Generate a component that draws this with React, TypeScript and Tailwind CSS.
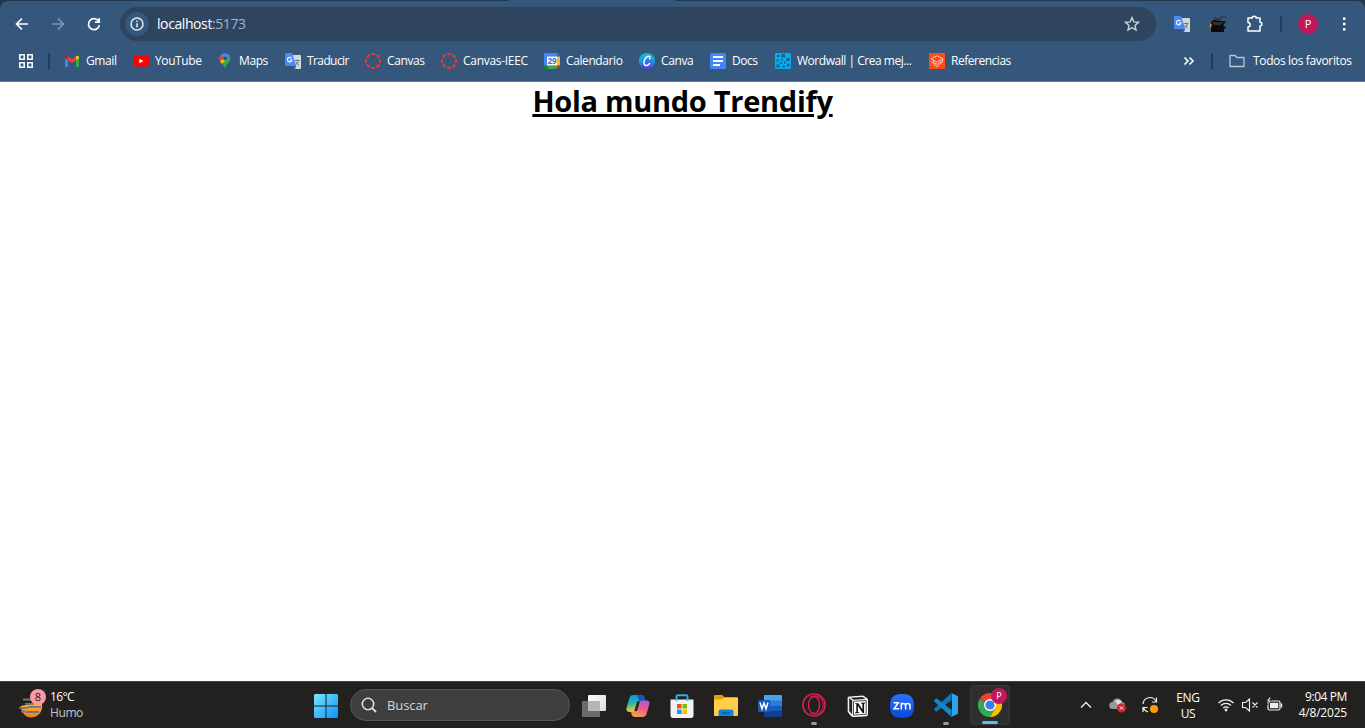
import React from "react";

type P = { children?: React.ReactNode; className?: string };

const Svg = ({ w = 16, h = w, vb, children, className = "" }: P & { w?: number; h?: number; vb?: string }) => (
  <svg width={w} height={h} viewBox={vb ?? `0 0 ${w} ${h}`} fill="none" className={"block shrink-0 " + className}>
    {children}
  </svg>
);

const Translate = () => (
  <Svg>
    <path d="M7 2h8.2a.8.8 0 0 1 .8.8v12.400a.8.8 0 0 1-.8.8H10z" fill="#d5d8dc" />
    <path d="M9.500 7.500h5M12 6.500v1M13.700 7.500c-.5 2-2 3.600-3.400 4.400M11 9c.6 1.500 1.600 2.500 3 3.300" stroke="#6b7681" />
    <path d="M.8 0H7l4.300 13H.8a.8.8 0 0 1-.8-.8V.8A.8.8 0 0 1 .8 0z" fill="#4a8af4" />
    <path d="M10 16l1.300-3H8.500z" fill="#3367d6" />
    <path d="M6.600 5.200A2.300 2.300 0 1 0 7 7H4.800" stroke="#fff" strokeWidth="1.100" />
  </Svg>
);

const CanvasRing = () => (
  <Svg>
    <circle cx="8" cy="8" r="7" stroke="#e43d30" strokeWidth="2.100" strokeDasharray="3.900 1.598" strokeDashoffset="1.950" />
  </Svg>
);

const Gmail = () => (
  <Svg>
    <path d="M1 5v8.2c0 .5.4.8.8.8H4V7z" fill="#4285f4" />
    <path d="M15 5v8.2c0 .5-.4.8-.8.8H12V7z" fill="#34a853" />
    <path d="M1 4.400C1 2.800 2.700 2.300 4 3.200v4.100L1 5.200z" fill="#c5221f" />
    <path d="M15 4.400C15 2.800 13.300 2.300 12 3.200v4.100l3-2.100z" fill="#fbbc04" />
    <path d="M4 3.200l4 3 4-3v4.100l-4 3-4-3z" fill="#ea4335" />
  </Svg>
);

const YouTube = () => (
  <Svg>
    <rect x="0" y="2.500" width="16" height="11" rx="2.500" fill="#f00" />
    <path d="M6.300 5.700v4.600L10.500 8z" fill="#fff" />
  </Svg>
);

const Maps = () => (
  <Svg>
    <path d="M2.700 5.500A5.300 5.300 0 0 1 13.300 5.500C13.300 9.500 9 11 8 16C7 11 2.700 9.500 2.700 5.500z" fill="#34a853" />
    <path d="M3.700 2.500L9.500 7 4.500 10.700C3.200 8.800 2.700 7.400 2.700 5.500z" fill="#fbbc04" />
    <path d="M4 2L7 5 3.700 8.300C2.500 6 2.600 3.800 4 2z" fill="#ea4335" />
    <path d="M4 2C6.500-.8 11.800-.5 13 3.800L9.500 7 8 3.500 5.800 4z" fill="#4285f4" />
    <circle cx="8" cy="5.500" r="1.900" fill="#315474" />
  </Svg>
);

const Calendar = () => (
  <Svg>
    <path d="M1 0h12v3.500H3.500V13H0V1a1 1 0 0 1 1-1z" fill="#4285f4" />
    <path d="M13 0h2a1 1 0 0 1 1 1v2.500h-3z" fill="#1967d2" />
    <path d="M12.500 3.500H16v9h-3.500z" fill="#fbbc04" />
    <path d="M3.500 12.500h9V16h-9z" fill="#34a853" />
    <path d="M0 12.500h3.500V16H1a1 1 0 0 1-1-1z" fill="#188038" />
    <path d="M12.500 12.500H16L12.500 16z" fill="#ea4335" />
    <path d="M3 3.500h10v9H3z" fill="#fff" />
    <text x="8" y="11" fontSize="8" fontWeight="700" fontFamily="Open Sans, sans-serif" textAnchor="middle" fill="#2a6fde">29</text>
  </Svg>
);

const Canva = () => (
  <Svg>
    <defs>
      <linearGradient id="cv" x1="3" y1="16" x2="13" y2="0" gradientUnits="userSpaceOnUse">
        <stop stopColor="#6420ff" />
        <stop offset=".5" stopColor="#3a70e4" />
        <stop offset="1" stopColor="#00c9d8" />
      </linearGradient>
      <linearGradient id="cv2" x1="0" y1="3" x2="9" y2="9" gradientUnits="userSpaceOnUse">
        <stop stopColor="#00d0d8" />
        <stop offset="1" stopColor="#00c4cc" stopOpacity="0" />
      </linearGradient>
    </defs>
    <circle cx="8" cy="8" r="8" fill="url(#cv)" />
    <circle cx="8" cy="8" r="8" fill="url(#cv2)" />
    <path d="M10 6.200c1.400-.8 1.500-3-.2-3C7.300 3.200 4.900 6.500 4.900 9.500c0 3.700 3.600 4.200 6 .7" stroke="#fff" strokeWidth="1.400" />
  </Svg>
);

const Docs = () => (
  <Svg>
    <rect width="16" height="16" rx="1.500" fill="#4285f4" />
    <path d="M3 4h10M3 8h10M3 12h7" stroke="#fff" strokeWidth="2" />
  </Svg>
);

const Wordwall = () => (
  <Svg>
    <rect width="16" height="16" rx="1" fill="#00aeef" />
    <path d="M2 2h2.500v2H2zM6.500 1h3.500v3.500H6.500zM1.500 6.500h2v2h-2zM6 6h2v1.500H6zM11.500 5h3v3h-3zM5 9h2v2H5zM9 8.500h1.500v2H9zM1.500 11.500h3v3h-3zM7.500 12.500H10v2H7.500zM12 11h2.500v2.500H12z" fill="#285a83" />
  </Svg>
);

const Referencias = () => (
  <Svg>
    <rect width="16" height="16" fill="#fc4c1c" />
    <path d="M8 2.800l6 3-6 3.400-6-3.400zM4.300 7.500v1.800L8 11.300l3.700-2V7.500M2.300 8.800L8 13.800l5.700-5V6" stroke="#ffd9cc" strokeWidth=".9" />
  </Svg>
);

const marks: [string, React.FC, string, string][] = [
  ["Gmail", Gmail, "w-[69px]", "tracking-[-0.4px]"],
  ["YouTube", YouTube, "w-[84px]", "tracking-[-0.4px]"],
  ["Maps", Maps, "w-[68px]", "tracking-[-0.4px]"],
  ["Traducir", Translate, "w-[80px]", "tracking-[-0.6px]"],
  ["Canvas", CanvasRing, "w-[76px]", "tracking-[-0.4px]"],
  ["Canvas-IEEC", CanvasRing, "w-[103px]", "tracking-[-0.3px]"],
  ["Calendario", Calendar, "w-[95px]", "tracking-[-0.4px]"],
  ["Canva", Canva, "w-[71px]", "tracking-[-0.4px]"],
  ["Docs", Docs, "w-[65px]", "tracking-[-0.5px]"],
  ["Wordwall | Crea mej...", Wordwall, "w-[154px]", "tracking-[-0.47px]"],
  ["Referencias", Referencias, "w-[90px]", "tracking-[-0.48px]"],
];

function BrowserBar() {
  return (
    <header className="h-[82px] shrink-0 bg-[#24364b] text-white">
      <div className="flex h-px pl-[508px]"><div className="w-[168px] bg-[#35577c]" /></div>
      <div className="h-[81px] rounded-t-[8px] border-b border-[#627d99] bg-[#35577c]">
        <div className="flex h-[46px] items-center pl-3.5">
          <Svg className="mr-5"><path d="M14 8H3M8 2.500L2.500 8 8 13.500" stroke="#fff" strokeWidth="1.700" /></Svg>
          <Svg className="mr-5"><path d="M2 8h11M8 2.500L13.500 8 8 13.500" stroke="#7f97af" strokeWidth="1.700" /></Svg>
          <Svg><path d="M12.800 5.500A5.500 5.500 0 1 0 13.400 9.200M13.200 2v4.200H9" stroke="#fff" strokeWidth="1.700" /></Svg>
          <div className="ml-[18px] flex h-[34px] w-[1036px] items-center rounded-full bg-[#2f445f] pl-[5px] pr-4">
            <div className="grid size-6 place-items-center rounded-full bg-[#35577c]">
              <Svg w={14}><circle cx="7" cy="7" r="6" stroke="#e4e9ef" strokeWidth="1.500" /><path d="M7 6.200v4M7 3.500v1.500" stroke="#e4e9ef" strokeWidth="1.500" /></Svg>
            </div>
            <span className="ml-2 text-sm tracking-[-0.41px]">localhost<span className="text-[#a5b2c1]">:5173</span></span>
            <Svg className="ml-auto"><path d="M8 1.600l1.800 4.300 4.700.4-3.500 3.100 1 4.600L8 11.600 4 14l1-4.600L1.500 6.300l4.700-.4z" stroke="#c8d0d9" strokeWidth="1.400" /></Svg>
          </div>
          <div className="ml-[18px]"><Translate /></div>
          <Svg className="ml-5">
            <path d="M4 3c2-3 4 1 6-1s4-1 6-.5M5 4l6-.5" stroke="#30363b" strokeWidth="1.200" />
            <path d="M1 6l3-2 12 1.500-3 4 3 2-2 1.500v3H1z" fill="#0b0b0b" />
            <path d="M2 6l12 .3L10 9.500 3 8.500z" fill="#303030" />
            <path d="M0 7l2 2-2 4z" fill="#ef8b22" />
          </Svg>
          <Svg w={18} className="ml-5"><path d="M2 3h4.300C6.300.8 10.200.8 10.200 3H14v4.200c2.500 0 2.500 3.800 0 3.800v5H2v-4c2.900-.3 2.900-4.200 0-4.500z" stroke="#fff" strokeWidth="1.500" strokeLinejoin="round" /></Svg>
          <div className="ml-4 h-4 w-0.5 bg-[#233c57]" />
          <div className="ml-4 grid size-5 place-items-center rounded-full bg-[#c2185b] text-[11px]">P</div>
          <Svg className="ml-[18px]"><path d="M7 1.500h2.500v2.500H7zM7 6.700h2.500v2.500H7zM7 12h2.500v2.500H7z" fill="#fff" /></Svg>
        </div>
        <nav className="flex h-7 items-center pl-[18px] text-xs">
          <Svg><path d="M1.800 1.800h4.400v4.400H1.800zM9.800 1.800h4.400v4.400H9.800zM1.800 9.800h4.400v4.400H1.800zM9.800 9.800h4.400v4.400H9.800z" stroke="#f5f7f9" strokeWidth="1.600" /></Svg>
          <div className="ml-3.5 mr-3.5 h-4 w-0.5 bg-[#233c57]" />
          {marks.map(([label, Icon, w, tr]) => (
            <div key={label} className={"flex shrink-0 items-center gap-1.5 whitespace-nowrap " + w}>
              <Icon /><span className={tr}>{label}</span>
            </div>
          ))}
          <Svg className="ml-[162px]"><path d="M3.500 4.500L7 8l-3.500 3.500M8.500 4.500L12 8l-3.500 3.500" stroke="#fff" strokeWidth="1.600" /></Svg>
          <div className="ml-3.5 h-4 w-0.5 bg-[#233c57]" />
          <Svg className="ml-4"><path d="M1 2.500h5l2 2h7v9H1z" stroke="#bdc7d1" strokeWidth="1.300" strokeLinejoin="round" /></Svg>
          <span className="ml-2 whitespace-nowrap tracking-[-0.35px]">Todos los favoritos</span>
        </nav>
      </div>
    </header>
  );
}

const Win = () => (
  <Svg w={24}>
    <defs><linearGradient id="wn" x1="0" y1="0" x2="24" y2="24" gradientUnits="userSpaceOnUse"><stop stopColor="#7ae6ff" /><stop offset="1" stopColor="#0a91f7" /></linearGradient></defs>
    <path d="M1 0h10.500v11.500H0V1zM12.500 0H23l1 1v10.500H12.500zM0 12.500h11.500V24H1l-1-1zM12.500 12.500H24V23l-1 1H12.500z" fill="url(#wn)" />
  </Svg>
);
const TaskView = () => (
  <Svg w={24}>
    <defs><linearGradient id="tv" x1="6" y1="1" x2="24" y2="17" gradientUnits="userSpaceOnUse"><stop stopColor="#fff" /><stop offset="1" stopColor="#dcdcdc" /></linearGradient></defs>
    <rect y="7" width="18" height="16" rx="1" fill="#6b6b6b" /><rect x="6" y="1" width="18" height="16" rx="1" fill="url(#tv)" /><path d="M6 7h12v10H6z" fill="#b6b6b6" />
  </Svg>
);
const Copilot = () => (
  <Svg w={24}>
    <defs>
      <linearGradient id="c1" x1="3" y1="2" x2="5" y2="17" gradientUnits="userSpaceOnUse"><stop stopColor="#1790e8" /><stop offset=".5" stopColor="#23b6b1" /><stop offset="1" stopColor="#f2c328" /></linearGradient>
      <linearGradient id="c2" x1="20" y1="6" x2="13" y2="23" gradientUnits="userSpaceOnUse"><stop stopColor="#a65ae8" /><stop offset=".5" stopColor="#f0578a" /><stop offset="1" stopColor="#ff9a50" /></linearGradient>
    </defs>
    <path d="M17.500 6.500h3c2.400 0 3.500 1.600 2.800 4L20.500 20c-.7 2-1.800 3-4 3H9c-2 0-3-1-3.500-3l-.5-2h2.500c2 0 3-1 3.500-3l1.800-6c.6-1.800 1.700-2.500 4.700-2.500z" fill="url(#c2)" />
    <path d="M7.500 1h7.500c2 0 2.800.9 3.300 2.800l.8 2.700h-2.600c-1.900 0-2.900.8-3.500 2.700l-2 6.300c-.5 1.700-1.600 2.500-3.500 2.500h-4C1.200 18-.2 16.500.5 14L3.300 4.200C4 2 5.200 1 7.500 1z" fill="url(#c1)" />
    <path d="M11 1h4c2 0 2.800.9 3.300 2.800l.8 2.700h-2.600c-1.500 0-2.500.6-3.100 1.600z" fill="#1953c5" />
    <path d="M11.300 7.500h2.500l-2.800 9.500H8.300z" fill="#222120" />
  </Svg>
);
const Store = () => (
  <Svg w={24}>
    <path d="M6.500 7V2.500c0-.7.400-1.200 1.200-1.200h8.600c.8 0 1.200.5 1.200 1.200V7" stroke="#29b1e5" strokeWidth="1.900" />
    <path d="M.5 5.500h23v15.700a2.800 2.800 0 0 1-2.800 2.800H3.300a2.800 2.800 0 0 1-2.800-2.800z" fill="#f2f2f2" />
    <path d="M6.500 5.500V7M17.500 5.500V7" stroke="#29b1e5" strokeWidth="1.900" />
    <path d="M7 10h4.600v4.500H7z" fill="#f25022" /><path d="M12.500 10H17v4.500h-4.500z" fill="#7fba00" /><path d="M7 15.500h4.600V20H7z" fill="#00a4ef" /><path d="M12.500 15.500H17V20h-4.500z" fill="#ffb900" />
  </Svg>
);
const Folder = () => (
  <Svg w={24}>
    <path d="M0 2a1 1 0 0 1 1-1h7.500l2 2.500L8 7H0z" fill="#dfa000" />
    <path d="M0 5.500h8l2.500-2.300H23a1 1 0 0 1 1 1V21a1 1 0 0 1-1 1H1a1 1 0 0 1-1-1z" fill="#ffcf48" />
    <path d="M4.500 22v-4.500a2 2 0 0 1 2-2h11a2 2 0 0 1 2 2V22z" fill="#1583d8" /><path d="M8 19h8" stroke="#0b5c9f" strokeWidth="1.500" />
  </Svg>
);
const Word = () => (
  <Svg w={24}>
    <path d="M6 2a1 1 0 0 1 1-1h16a1 1 0 0 1 1 1v5H6z" fill="#41a5ee" /><path d="M6 6.500h18V12H6z" fill="#2b7cd3" /><path d="M6 12h18v5.500H6z" fill="#185abd" /><path d="M6 17.500h18V22a1 1 0 0 1-1 1H7a1 1 0 0 1-1-1z" fill="#103f91" />
    <rect y="6" width="12" height="12" rx="1" fill="#1856b8" /><path d="M2 8.500l2 6.300L6 9l2 5.800 2-6.300" stroke="#fff" strokeWidth="1.500" />
  </Svg>
);
const Opera = () => (
  <Svg w={24}>
    <circle cx="12" cy="12" r="11.100" stroke="#e9204f" strokeWidth="1.400" /><ellipse cx="12" cy="12" rx="5.500" ry="8.500" stroke="#e9204f" strokeWidth="1.300" /><path d="M8 4.300C11 2 16 2 19 6c3 4 3 8 0 12-3 4-8 4-11 1.700" stroke="#c41c47" strokeWidth="1.200" />
  </Svg>
);
const Notion = () => (
  <Svg w={24}>
    <path d="M2.200 3.200L17 2l4.500 3v15.500c0 .8-.4 1.200-1.200 1.300L7 22.500c-.8 0-1.200-.2-1.700-.8l-2.600-3.300c-.4-.5-.5-.9-.5-1.500z" fill="#fff" stroke="#fff" />
    <path d="M3.200 4.200l3 2.400v14L3.200 17zM4.500 3.800L16.600 3l3 2-12 .8z" fill="#222" />
    <path d="M7.500 7.300l12.700-.8v13.700l-12.700.9z" fill="#fff" stroke="#222" strokeWidth=".8" />
    <path d="M9 9.200h3.400l4 6.300V10l-1.300-.5v-.7l4.200-.2v.7l-1.200.5v9.200h-1.500l-4.700-7.300V18l1.400.4v.7L9 19.300v-.7l1.300-.6v-8L9 9.800z" fill="#111" />
  </Svg>
);
const Zoom = () => (
  <Svg w={24}>
    <defs><linearGradient id="zm" x1="12" y1="0" x2="12" y2="24" gradientUnits="userSpaceOnUse"><stop stopColor="#2b73ff" /><stop offset="1" stopColor="#0749db" /></linearGradient></defs>
    <path d="M12 0c8.500 0 12 3.500 12 12s-3.500 12-12 12S0 20.500 0 12 3.500 0 12 0z" fill="url(#zm)" />
    <path d="M3.500 8.700h4.800l-4.200 6h5M11.300 15.500V8.700M11.300 11.500c0-2.800 4.300-2.800 4.300 0v4M15.600 11.500c0-2.800 4.400-2.800 4.400 0v4" stroke="#fff" strokeWidth="1.500" />
  </Svg>
);
const Code = () => (
  <Svg w={24}>
    <path d="M17.500 0v7L3.200 18.200c-.5.4-.9.400-1.300 0L.4 16.900c-.5-.5-.5-1 0-1.500z" fill="#0f76b8" />
    <path d="M17.500 24v-7L3.200 5.800c-.5-.4-.9-.4-1.300 0L.4 7.100c-.5.500-.5 1 0 1.500z" fill="#1488cc" />
    <path d="M17.300 0l5.700 2.700c.7.300 1 .8 1 1.500v15.600c0 .7-.3 1.200-1 1.500L17.300 24c-.5 0-1-.2-1.300-.5.900.6 2 .1 2-.9V1.400c0-1-1.100-1.500-2-.9.300-.3.800-.5 1.300-.5z" fill="#2ba5ec" />
  </Svg>
);
const Chrome = () => (
  <Svg w={24}>
    <path d="M12 12L1.600 6A12 12 0 0 1 22.400 6z" fill="#ea4335" /><path d="M12 12L1.600 6A12 12 0 0 0 12 24l5.200-9z" fill="#34a853" /><path d="M12 6h10.400A12 12 0 0 1 12 24l5.200-9z" fill="#fbbc04" />
    <circle cx="12" cy="12" r="6" fill="#fff" /><circle cx="12" cy="12" r="4.600" fill="#3b7fee" />
  </Svg>
);

const Slot = ({ children }: P) => <div className="flex w-11 shrink-0 justify-center pt-px">{children}</div>;
const Running = ({ children }: P) => (
  <div className="relative flex h-[47px] w-11 shrink-0 items-center justify-center">
    {children}<div className="absolute bottom-[4px] h-[3px] w-1.5 rounded-full bg-[#989898]" />
  </div>
);

function Taskbar() {
  return (
    <footer className="flex h-[47px] shrink-0 items-center border-t border-[#454543] bg-[#222120] text-xs text-white">
      <div className="flex w-[314px] items-center pl-[18px]">
        <Svg w={28} h={32}>
          <defs><linearGradient id="sn" x1="12" y1="14" x2="12" y2="28" gradientUnits="userSpaceOnUse"><stop stopColor="#ffb83c" /><stop offset="1" stopColor="#ee7d1e" /></linearGradient></defs>
          <path d="M2.500 17L14 15h10c1 8-4 13.500-11 13.500-5.500 0-9-4-10.500-11.500z" fill="url(#sn)" />
          <path d="M5 10.500h8M7 14.800h9M1 18.800h9M10 17.800h13M3 22.500h4M8 23h13" stroke="#77736d" strokeWidth="1.800" />
          <circle cx="20" cy="8" r="8" fill="#fe99a4" />
          <text x="20" y="12" textAnchor="middle" fontSize="11" fontFamily="Open Sans, sans-serif" fill="#24191b">8</text>
        </Svg>
        <div className="ml-1 leading-4"><div className="tracking-[-0.65px]">16°C</div><div className="tracking-[-0.4px] text-[#c4c4c4]">Humo</div></div>
      </div>
      <div className="pt-px"><Win /></div>
      <div className="ml-3 flex h-8 w-[220px] items-center rounded-full border border-[#555] bg-[#3e3e3e] pl-2.5 text-[13px] text-[#d6d6d6]">
        <Svg><circle cx="7" cy="7" r="5.700" stroke="#ddd" strokeWidth="1.600" /><path d="M11 11l4 4" stroke="#ddd" strokeWidth="1.800" /></Svg>
        <span className="ml-2.5 pt-0.5 tracking-[-0.1px]">Buscar</span>
      </div>
      <div className="ml-0.5 flex items-center">
        <Slot><TaskView /></Slot><Slot><Copilot /></Slot><Slot><Store /></Slot><Slot><Folder /></Slot><Slot><Word /></Slot>
        <Running><Opera /></Running><Slot><Notion /></Slot><Slot><Zoom /></Slot><Running><Code /></Running>
        <div className="relative ml-0.5 grid size-10 place-items-center rounded-[4px] border border-[#373736] bg-[#2e2e2d]">
          <Chrome />
          <div className="absolute right-[2px] top-[2px] grid size-4 place-items-center rounded-full bg-[#c2185b] text-[9px]">P</div>
          <div className="absolute bottom-0 h-[3px] w-4 rounded-full bg-[#4cc2ff]" />
        </div>
      </div>
      <Svg className="ml-[68px]"><path d="M3 10.500L8 5.500l5 5" stroke="#eee" strokeWidth="1.400" /></Svg>
      <Svg w={18} className="ml-[15px]">
        <path d="M4 13a3.500 3.500 0 0 1-.5-7A5 5 0 0 1 13 6a3.500 3.500 0 0 1 3 4v3z" fill="#969696" /><path d="M6 5a4.500 4.500 0 0 1 7 1L9 9z" fill="#ddd" />
        <circle cx="12.500" cy="12" r="4.500" fill="#d61f2c" /><path d="M10.800 10.300l3.400 3.400M14.200 10.300l-3.400 3.400" stroke="#fff" />
      </Svg>
      <Svg w={18} className="ml-3.5">
        <path d="M2 8a7 7 0 0 1 13-3M15.500 1.500V6H11M2 16v-4.500h4.500M2.500 12A7 7 0 0 0 7 16" stroke="#eee" strokeWidth="1.200" /><circle cx="13" cy="13" r="4" fill="#ff9c0a" />
      </Svg>
      <div className="ml-3 w-[34px] pt-px text-center leading-4"><div className="tracking-[-0.3px]">ENG</div><div className="tracking-[-0.3px]">US</div></div>
      <Svg w={18} className="ml-3">
        <path d="M1.500 7a10.500 10.500 0 0 1 15 0M4 9.500a7 7 0 0 1 10 0M6.300 12a3.800 3.800 0 0 1 5.400 0" stroke="#eee" strokeWidth="1.300" /><circle cx="9" cy="14" r="1.400" fill="#eee" />
      </Svg>
      <Svg w={18} className="ml-[6px]"><path d="M1.500 6.500h3L8.500 3v12l-4-3.500h-3zM11.500 6.500l5 5M16.500 6.500l-5 5" stroke="#eee" strokeWidth="1.100" /></Svg>
      <Svg w={18} className="ml-[6px]">
        <rect x="3" y="5" width="12" height="9" rx="1.500" stroke="#eee" strokeWidth="1.200" /><path d="M5 6.800h8.300v5.400H5z" fill="#eee" /><path d="M16.500 7.500v4" stroke="#eee" strokeWidth="1.400" /><path d="M4.500 1L1.500 5.500h2L2 9.500l4.500-5h-2L6 1z" stroke="#222120" fill="#eee" strokeWidth=".6" />
      </Svg>
      <div className="ml-auto mr-[18px] whitespace-nowrap text-right leading-4"><div className="tracking-[-0.4px]">9:04 PM</div><div className="tracking-[-0.2px]">4/8/2025</div></div>
    </footer>
  );
}

export default function App() {
  return (
    <div className="flex h-[728px] w-[1365px] flex-col overflow-hidden bg-white font-['Open_Sans','Noto_Sans',sans-serif]">
      <BrowserBar />
      <main className="grow pt-px">
        <h1 className="text-center text-[29px] leading-9 font-bold tracking-[-0.28px] text-black underline decoration-[3px] underline-offset-[2px]">Hola mundo Trendify</h1>
      </main>
      <Taskbar />
    </div>
  );
}
